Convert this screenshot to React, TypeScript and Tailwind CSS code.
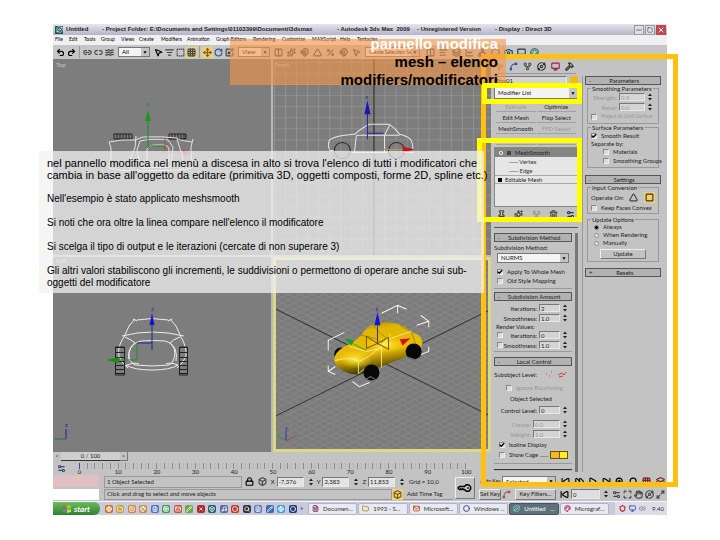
import React from 'react';
import {
  Undo2, Redo2, Link2, Unlink2, Waves, MousePointer2, ListFilter, SquareDashed, Grid3x3, Move, RotateCw, Scaling,
  Magnet, Percent, Triangle, Layers, AlignLeft, Columns2, ChartLine, Network, Circle, Camera, Monitor, Hammer,
  Sparkles, Pin, Trash2, Settings2, Lock, Box, KeyRound, SkipBack, SkipForward, Play, ZoomIn, Hand, Orbit, Maximize,
  Spline, Globe, Folder, FileText, Mail, Image, Music, Shield, Table, Pencil, Palette, Check, GitFork, Maximize2,
  FastForward, Search, Volume2, Minus, X, Square,
} from 'lucide-react';

type IconType = React.ComponentType<{ className?: string; strokeWidth?: number }>;

const field = 'min-w-0 border border-[#777] border-r-[#e8e8e8] border-b-[#e8e8e8] px-px leading-none';

const Glyph: React.FC<{ icon: IconType; label: string; active?: boolean; color?: string }> = ({ icon: I, label, active, color = 'text-[#444]' }) => (
  <button aria-label={label} className={`flex size-[11px] shrink-0 items-center justify-center ${active ? 'bg-[#ecd07a]' : ''} ${color}`}>
    <I className="size-[9px]" strokeWidth={3} />
  </button>
);

const DropDown: React.FC<{ label: string; value: string; className: string }> = ({ label, value, className }) => (
  <span className={`flex border border-[#777] bg-[#f4f4f4] ${className}`}>
    <select aria-label={label} className="min-w-0 flex-1 appearance-none pl-[3px] leading-none">
      <option>{value}</option>
    </select>
    <span className="flex w-2 items-center justify-center bg-[#c4c4c4] text-[5px] leading-none text-black">▼</span>
  </span>
);

const Tick: React.FC<{ label: string; checked?: boolean; dim?: boolean; className?: string }> = ({ label, checked, dim, className = '' }) => (
  <label className={`flex items-center gap-1 whitespace-nowrap ${dim ? 'text-[#999]' : ''} ${className}`}>
    <span className="relative flex">
      <input type="checkbox" defaultChecked={checked} className="size-[6px] appearance-none border border-[#888] border-r-[#eee] border-b-[#eee] bg-[#dcdcdc]" />
      {checked && <Check className="pointer-events-none absolute inset-0 size-[6px] text-black" strokeWidth={5} />}
    </span>
    {label}
  </label>
);

const SpinArrows: React.FC = () => (
  <svg viewBox="0 0 6 8" className="ml-[2px] h-2 w-[6px] shrink-0" fill="#222">
    <path d="M3 0.5 5 3H1zM3 7.5 5 5H1z" />
  </svg>
);

const Spinner: React.FC<{ label: string; value: string; dim?: boolean; width?: string; tick?: boolean }> = ({ label, value, dim, width = 'w-[21px]', tick }) => (
  <div className="flex h-[10px] items-center">
    {tick && <input type="checkbox" aria-label={`Use ${label}`} className="size-[6px] appearance-none border border-[#888] border-r-[#eee] border-b-[#eee] bg-[#dcdcdc]" />}
    <label className={`flex flex-1 items-center justify-end gap-[2px] whitespace-nowrap ${dim ? 'text-[#999]' : ''}`}>
      {label}
      <input defaultValue={value} className={`h-2 bg-[#d4d4d4] ${field} ${width}`} />
    </label>
    <SpinArrows />
  </div>
);

const RollupTitle: React.FC<{ title: string; sign?: string }> = ({ title, sign = '-' }) => (
  <button className="flex h-[9px] w-full shrink-0 items-center border border-[#555] bg-[#b2b2b2] px-[3px] leading-none text-[#222]">
    <span>{sign}</span>
    <span className="flex-1 text-center">{title}</span>
  </button>
);

const Group: React.FC<{ title: string; className?: string; children: React.ReactNode }> = ({ title, className = '', children }) => (
  <fieldset className={`mx-[2px] min-w-0 border border-[#999] px-[3px] pb-[2px] ${className}`}>
    <legend className="px-px leading-[7px] whitespace-nowrap">{title}</legend>
    {children}
  </fieldset>
);

const TitleBar: React.FC = () => (
  <header className="flex h-[11px] items-center bg-linear-to-b from-[#e6e6f0] to-[#b4b4c6] pl-[2px] text-[6px] font-bold whitespace-pre text-[#222]">
    <span className="mr-[3px] flex size-2 items-center justify-center bg-[#1d5a5c] text-white"><Orbit className="size-[7px]" /></span>
    <h1 className="flex flex-1 overflow-hidden font-['Liberation_Sans',sans-serif]">
      <span className="w-9 shrink-0">Untitled</span>
      <span className="w-[235px] shrink-0">- Project Folder: E:\Documents and Settings\01103399\Documenti\3dsmax</span>
      <span className="w-20 shrink-0">- Autodesk 3ds Max  2009</span>
      <span className="w-[78px] shrink-0">- Unregistered Version</span>
      <span>- Display : Direct 3D</span>
    </h1>
    <div className="flex gap-px pr-px">
      <button aria-label="Minimize" className="flex size-[10px] items-end border border-[#999] bg-[#dedee6] text-[#333]"><Minus className="size-2" /></button>
      <button aria-label="Restore" className="flex size-[10px] items-center justify-center border border-[#999] bg-[#dedee6] text-[#333]"><Square className="size-[6px]" /></button>
      <button aria-label="Close" className="flex size-[10px] items-center justify-center bg-[#c2474c] text-white"><X className="size-2" strokeWidth={3} /></button>
    </div>
  </header>
);

const menus: [string, string][] = [
  ['File', 'w-[14px]'], ['Edit', 'w-[15px]'], ['Tools', 'w-[17px]'], ['Group', 'w-5'], ['Views', 'w-[18px]'],
  ['Create', 'w-[22px]'], ['Modifiers', 'w-[26px]'], ['Animation', 'w-[29px]'], ['Graph Editors', 'w-[37px]'],
  ['Rendering', 'w-[29px]'], ['Customize', 'w-[30px]'], ['MAXScript', 'w-7'], ['Help', 'w-[17px]'], ['Tentacles', 'w-7'],
];

const MenuBar: React.FC = () => (
  <nav className="flex h-[10px] items-center bg-[#f0f0f2] pl-[2px] text-[5px] whitespace-nowrap text-black">
    {menus.map(([name, width]) => (
      <button key={name} className={`shrink-0 text-left ${width}`}>{name}</button>
    ))}
  </nav>
);

const Toolbar: React.FC = () => (
  <div className="flex h-[14px] items-center overflow-hidden bg-[#c6c6c6] pl-[2px] text-[6px]">
    <Glyph icon={Undo2} label="Undo" color="text-black" />
    <Glyph icon={Redo2} label="Redo" color="text-black" />
    <span className="mx-[2px] h-3 w-px bg-[#999]" />
    <Glyph icon={Link2} label="Select and link" />
    <Glyph icon={Unlink2} label="Unlink" />
    <Glyph icon={Waves} label="Bind to space warp" />
    <DropDown label="Selection filter" value="All" className="mx-[3px] h-[10px] w-8 shrink-0" />
    <Glyph icon={MousePointer2} label="Select" color="text-black" />
    <Glyph icon={ListFilter} label="Select by name" />
    <Glyph icon={SquareDashed} label="Region" />
    <Glyph icon={Grid3x3} label="Crossing" active />
    <span className="mx-[2px] h-3 w-px bg-[#999]" />
    <Glyph icon={Move} label="Move" active color="text-[#8a5a10]" />
    <Glyph icon={RotateCw} label="Rotate" color="text-[#335599]" />
    <Glyph icon={Scaling} label="Scale" />
    <DropDown label="Reference coordinates" value="View" className="mx-[3px] h-[10px] w-8 shrink-0" />
    <div className="mr-[3px] flex gap-[2px]">
      <Glyph icon={Columns2} label="Pivot" />
      <Glyph icon={Sparkles} label="Manipulate" />
      <Glyph icon={Magnet} label="Snap" />
      <Glyph icon={Triangle} label="Angle snap" />
      <Glyph icon={Percent} label="Percent snap" />
      <Glyph icon={Magnet} label="Spinner snap" />
      <Glyph icon={MousePointer2} label="Edit selection sets" />
    </div>
    <DropDown label="Selection sets" value="Create Selection Set" className="mr-[5px] h-[10px] w-[55px] shrink-0 text-[5px]" />
    <div className="flex gap-[2px]">
      <Glyph icon={Columns2} label="Mirror" />
      <Glyph icon={AlignLeft} label="Align" />
      <Glyph icon={Layers} label="Layers" />
      <Glyph icon={ChartLine} label="Curve editor" />
      <Glyph icon={Network} label="Schematic" />
      <Glyph icon={Circle} label="Materials" />
      <Glyph icon={Camera} label="Render setup" color="text-[#1d4a4c]" />
      <Glyph icon={Monitor} label="Frame window" color="text-[#1d3a4c]" />
      <Glyph icon={Palette} label="Render" color="text-[#0f6a5c]" />
    </div>
  </div>
);

const TopView: React.FC = () => (
  <svg viewBox="53 59 218 196" preserveAspectRatio="xMinYMin slice" className="h-[196px] w-full bg-[#7d7d7d]" fill="none">
    <text x="56" y="67" fontSize="6" fill="#c8c8c8">Top</text>
    <g stroke="#222" strokeWidth="1">
      <path d="M114 134h18v5h-18zM169 134h17v5h-17zM117 134v5M120 134v5M123 134v5M126 134v5M129 134v5M172 134v5M175 134v5M178 134v5M181 134v5M184 134v5" />
    </g>
    <g stroke="#e2e2e2" strokeWidth="1">
      <path d="M109 142q3 5 2 14l-2 12q12 3 26 3l42-1q12 0 16-3l-2-12q-1-8 2-16" />
      <path d="M109 142q13-3 26-2l8-3q18-1 34 1l3 2 12 2M136 136l-1 12-4 8v13M177 139l3 10 3 8-1 12" />
      <path d="M140 141q12-3 28-1l5 7-2 20-30 1-4-18zM147 149q2-4 7-4l10 0q5 1 5 5v12h-22z" />
    </g>
    <path d="M148 110l3 11h-6z" fill="#1c991c" />
    <path d="M148 120v28M148 146h17" stroke="#1f8a1f" />
    <path d="M165 138v15h18" stroke="#a34a4a" />
    <path d="M183 150l9 3-9 3z" fill="#c22" />
    <text x="146" y="106" fontSize="6" fill="#1c8a1c">y</text>
    <path d="M66 241v9M66 240h10" stroke="#668866" />
  </svg>
);

const SideView: React.FC = () => (
  <svg viewBox="274 59 217 196" preserveAspectRatio="xMinYMin slice" className="h-[196px] w-full bg-[#7d7d7d]" fill="none">
    <defs>
      <pattern id="grid" x="275" y="62" width="11" height="11" patternUnits="userSpaceOnUse">
        <path d="M.5 0v11M0 .5h11" stroke="#909090" />
      </pattern>
    </defs>
    <rect x="274" y="59" width="217" height="196" fill="url(#grid)" />
    <text x="276" y="67" fontSize="6" fill="#c8c8c8">Front</text>
    <path d="M374.500 59v196" stroke="#1a1a1a" />
    <g stroke="#e6e6e6">
      <path d="M330 149q-2-7 1-10 7-4 24-5 10-8 15-10l20 0q6 4 10 10 8 2 11 5 3 6 2 11M357 135l-2 17M357 135h43M390 125l-5 10v17M352 152h36M330 150h5M405 152h9" />
    </g>
    <circle cx="343" cy="150" r="8" stroke="#222" />
    <circle cx="397" cy="150" r="8" stroke="#222" />
    <path d="M368 100l3 14h-6z" fill="#1717b8" />
    <path d="M368 113v26M368 133h16" stroke="#2525a0" />
    <text x="366" y="99" fontSize="6" fill="#2525a0">z</text>
    <path d="M384 149h20" stroke="#c09060" />
    <path d="M403 146l12 3-12 3z" fill="#d01010" />
    <path d="M286 232v10h12" stroke="#6666aa" />
  </svg>
);

const rungs = [348, 353, 358, 362, 366, 370, 374];

const RearView: React.FC = () => (
  <svg viewBox="53 258 218 195" preserveAspectRatio="xMinYMin slice" className="h-[195px] w-full bg-[#7d7d7d]" fill="none">
    <text x="56" y="264" fontSize="6" fill="#c8c8c8">Left</text>
    <g stroke="#eeeeee">
      <path d="M135 320l-6 7-5 11q-7 10-5 19 3 8 9 12M170 320l6 7 5 11q6 10 5 19-3 8-9 12M133 320l4 2M172 320l-4 2" />
      <path d="M137 321q15-3 31 0M122 337q30-8 62 0M125 338q7 3 10 6M180 338q-8 3-10 6" />
      <path d="M141 342q12-1 24 0 9 2 10 12-1 10-6 12-16 2-34 0-7-4-6-12 2-10 12-12z" />
      <path d="M135 344q-8 5-6 18M170 344q8 5 6 18M127 366q8-3 12-1M178 366q-8-3-12-1M126 366q8 5 26 5t26-5" />
    </g>
    <g stroke="#222">
      <path d="M115.500 348v28h9v-28zM179.500 348v28h8v-28z" />
      {rungs.map((y) => <path key={y} d={`M115 ${y + 0.5}h9M179 ${y + 0.5}h8`} />)}
    </g>
    <path d="M152 314l2.500 12h-5z" fill="#1515d0" />
    <path d="M152 325v26M137 344h15" stroke="#22228a" />
    <text x="151" y="312" fontSize="6" fill="#2525a0">z</text>
    <path d="M106 361l13-3v6z" fill="#159015" />
    <path d="M119 361h18v-16" stroke="#2f8a2f" />
    <path d="M66 430v10" stroke="#22228a" />
    <path d="M66 440h-11" stroke="#2f7a2f" />
    <text x="65" y="428" fontSize="6" fill="#22228a">z</text>
  </svg>
);

const PerspectiveView: React.FC = () => (
  <svg viewBox="276 260 211 189" preserveAspectRatio="xMinYMin slice" className="h-[189px] w-full bg-[#7b7b7b]" fill="none">
    <defs>
      <pattern id="floor" width="12" height="6" patternUnits="userSpaceOnUse">
        <path d="M0 0l12 6M0 6l12-6" stroke="#8d8d8d" strokeWidth="0.7" />
      </pattern>
      <linearGradient id="paint" x1="0" y1="0" x2="0.3" y2="1">
        <stop offset="0" stopColor="#8f7a00" />
        <stop offset="0.25" stopColor="#e0b600" />
        <stop offset="0.65" stopColor="#e8bc08" />
        <stop offset="1" stopColor="#3c3200" />
      </linearGradient>
      <radialGradient id="shine">
        <stop offset="0" stopColor="#ffee55" />
        <stop offset="1" stopColor="#ffd900" stopOpacity="0" />
      </radialGradient>
    </defs>
    <rect x="275" y="260" width="213" height="192" fill="url(#floor)" />
    <path d="M274 308l217 108M274 416l214-106" stroke="#333" />
    <g stroke="#f2f2f2">
      <path d="M328 350v-10l16-8M328 365v6l7 3M328 371l7-5M381 313l16-8v8M397 305l9 4M420 315l8 6-12 4M428 321v6M428 346v5l-10 4M352 381l7 5 10-4" />
    </g>
    <ellipse cx="340" cy="354" rx="6" ry="7" fill="#080808" />
    <path d="M334 360q-1-7 10-14 10-4 17-11 5-9 12-11 10-3 21-1 10 2 17 9 8 2 10 7 2 6-2 11l-15 7-34 13q-10 6-21 3-13-4-15-13z" fill="url(#paint)" />
    <ellipse cx="355" cy="359" rx="17" ry="9" fill="url(#shine)" />
    <ellipse cx="385" cy="344" rx="20" ry="8" fill="url(#shine)" />
    <path d="M361 335q14 2 20 7l5-4q-10-8-13-13M399 325l12 7 6 17" stroke="#9c8200" strokeWidth="0.8" />
    <path d="M358 361v12l8-6M349 346l17 5 14-3 10-14M381 345v22M411 331q-12 4-24 8M335 360q14-4 24 1 12-6 21-14" stroke="#fff2a0" strokeWidth="0.8" />
    <ellipse cx="371" cy="372" rx="8" ry="8" fill="#080808" />
    <ellipse cx="413" cy="351" rx="8" ry="8" fill="#080808" />
    <path d="M365 379l5-3 5 3M408 357l6 2" stroke="#777" />
    <path d="M377 312l3 13h-6z" fill="#1212e0" />
    <path d="M377 324v20" stroke="#333399" />
    <text x="375" y="311" fontSize="6" fill="#2525a0">z</text>
    <path d="M366 336v12l11-5 11 6v-12l-11 6z" stroke="#7a5a00" />
    <path d="M344 338l10 2-3 5z" fill="#16a030" />
    <path d="M352 343l14 7" stroke="#44aa22" />
    <path d="M410 338l-11 1 3 6z" fill="#d01414" />
    <path d="M286 430v10" stroke="#2233aa" />
    <path d="M286 440l11-6" stroke="#b04444" />
    <path d="M286 440l-8-5" stroke="#339933" />
    <text x="285" y="429" fontSize="6" fill="#2233aa">z</text>
  </svg>
);

const TimeLine: React.FC = () => (
  <div className="bg-[#c3c3c3] text-[6px] leading-none text-[#222]">
    <div className="flex h-[9px] items-stretch">
      <button className="w-2 text-[5px]">&lt;</button>
      <button className="w-[59px] border-b border-[#333] bg-[#cfcfcf]">0 / 100</button>
      <button className="w-2 border-r border-b border-[#777] text-[5px]">&gt;</button>
    </div>
    <div className="flex h-[14px]">
      <button aria-label="Mini curve editor" className="mr-[10px] ml-1 flex w-3 items-center text-[#334477]"><Settings2 className="size-[9px]" strokeWidth={3} /></button>
      <div className="mr-6 flex-1 pt-[2px]">
        <div className="flex justify-between">
          {Array.from({ length: 101 }, (_, i) => (
            <span key={i} className={`h-[6px] w-px ${i === 0 ? 'bg-[#2255aa]' : i % 2 ? 'bg-[#b8b8b8]' : 'bg-[#8a8a8a]'}`} />
          ))}
        </div>
        <div className="flex justify-between">
          {Array.from({ length: 11 }, (_, i) => (
            <span key={i} className="flex w-px justify-center">{i * 10}</span>
          ))}
        </div>
      </div>
    </div>
  </div>
);

const tabs: [IconType, string, string][] = [
  [MousePointer2, 'Create', 'text-[#b08050]'], [Spline, 'Modify', 'text-[#2a5590]'], [GitFork, 'Hierarchy', 'text-[#555]'],
  [Orbit, 'Motion', 'text-[#333]'], [Monitor, 'Display', 'text-[#992255]'], [Hammer, 'Utilities', 'text-[#333]'],
];

const modifierButtons: [string, boolean][] = [
  ['Extrude', true], ['Optimize', false], ['Edit Mesh', false], ['Flop Select', false],
  ['MeshSmooth', false], ['FFD Select', true], ['Subdivide', true], ['Poly Select', true],
];

const ModifierColumn: React.FC = () => (
  <div className="flex w-[84px] shrink-0 flex-col">
    <label className="mb-[2px] flex h-[9px] gap-[3px]">
      <input aria-label="Object name" defaultValue="Box01" className={`flex-1 bg-[#d4d4d4] ${field}`} />
      <span className="w-2 bg-[#f0b820]" />
    </label>
    <DropDown label="Modifier list" value="Modifier List" className="mb-[3px] h-[12px]" />
    <div className="mb-[2px] grid grid-cols-2 gap-px px-[2px]">
      {modifierButtons.map(([name, dim]) => (
        <button key={name} className={`h-[10px] border-b border-[#a0a0a0] leading-none whitespace-nowrap ${dim ? 'text-[#999]' : 'text-[#222]'}`}>{name}</button>
      ))}
    </div>
    <ul className="mb-[2px] h-[60px] border border-[#888] bg-[#e6e6e6] leading-[9px]">
      <li className="flex items-center gap-1 bg-[#858585] pl-1"><Circle className="size-1 text-white" strokeWidth={5} /><span className="size-1 bg-[#444]" />MeshSmooth</li>
      <li className="pl-[14px] text-[#333]">── Vertex</li>
      <li className="pl-[14px] text-[#333]">── Edge</li>
      <li className="flex items-center gap-[3px] border-y border-[#aaa] pl-[3px] leading-[7px]"><span className="size-1 bg-black" />Editable Mesh</li>
    </ul>
    <div className="flex justify-between px-[2px]">
      <Glyph icon={Pin} label="Pin stack" />
      <Glyph icon={Sparkles} label="Show end result" />
      <Glyph icon={GitFork} label="Make unique" color="text-[#999]" />
      <Glyph icon={Trash2} label="Remove modifier" />
      <Glyph icon={Settings2} label="Configure sets" color="text-[#223366]" />
    </div>
    <div className="mt-[7px] flex h-[245px] overflow-hidden border-t border-[#555] pt-[5px]">
      <div className="flex min-w-0 flex-1 flex-col">
        <section className="mb-[3px] h-[56px] shrink-0 border-b border-[#999]">
          <RollupTitle title="Subdivision Method" />
          <div className="pt-px leading-[9px] whitespace-nowrap">Subdivision Method:</div>
          <DropDown label="Subdivision method" value="NURMS" className="mx-[3px] mt-px h-[10px]" />
          <Tick label="Apply To Whole Mesh" checked className="mt-1 ml-[3px] leading-[9px]" />
          <Tick label="Old Style Mapping" className="ml-[3px] leading-[10px]" />
        </section>
        <section className="mb-[5px] h-[60px] shrink-0 border-b border-[#999] pr-1">
          <div className="-mr-1"><RollupTitle title="Subdivision Amount" /></div>
          <div className="h-[2px]" />
          <Spinner label="Iterations:" value="2" />
          <Spinner label="Smoothness:" value="1,0" />
          <div className="pl-[2px] leading-[7px]">Render Values:</div>
          <div className="pl-[3px]">
            <Spinner label="Iterations:" value="0" tick />
            <Spinner label="Smoothness:" value="1,0" tick />
          </div>
        </section>
        <section className="mb-[5px] h-[107px] shrink-0 border-b border-[#999] pr-1">
          <div className="-mr-1"><RollupTitle title="Local Control" /></div>
          <div className="flex h-[17px] items-center gap-2 whitespace-nowrap">
            Subobject Level:
            <svg viewBox="0 0 22 7" className="h-[7px] w-[22px]" fill="none" stroke="#c44">
              <path d="M1 3h1M4 5h1M6 1h1M13 4l4-2 2 2 2-3M14 6l4-1" />
            </svg>
          </div>
          <Tick label="Ignore Backfacing" dim className="ml-3 leading-[10px]" />
          <div className="text-center leading-[12px]">Object Selected</div>
          <Spinner label="Control Level:" value="0" />
          <div className="h-1" />
          <Spinner label="Crease:" value="0,0" dim width="w-[27px]" />
          <Spinner label="Weight:" value="1,0" dim width="w-[27px]" />
          <Tick label="Isoline Display" checked className="ml-[5px] leading-[11px]" />
          <div className="flex items-center justify-between">
            <Tick label="Show Cage ......" className="ml-[5px] leading-[10px]" />
            <span className="flex border border-[#665500]"><i className="h-[6px] w-2 bg-[#f5b820]" /><i className="h-[6px] w-2 border-l border-[#665500] bg-[#ffee20]" /></span>
          </div>
        </section>
        <div className="h-[2px] border-t border-[#333] bg-[#b2b2b2]" />
      </div>
      <div className="ml-[3px] w-[3px] bg-[#777]" />
    </div>
  </div>
);

const updateModes = ['Always', 'When Rendering', 'Manually'];

const ParametersColumn: React.FC = () => (
  <div className="ml-1 min-w-0 flex-1 border-l border-[#999] pl-[2px]">
    <RollupTitle title="Parameters" />
    <Group title="Smoothing Parameters" className="h-[39px]">
      <div className="pr-[2px]">
        <Spinner label="Strength:" value="0,5" dim width="w-[26px]" />
        <Spinner label="Relax:" value="0,0" dim width="w-[26px]" />
        <Tick label="Project to Limit Surface" dim className="text-[5px] leading-[9px]" />
      </div>
    </Group>
    <Group title="Surface Parameters" className="h-[44px]">
      <Tick label="Smooth Result" checked className="leading-[9px]" />
      <div className="leading-[8px]">Separate by:</div>
      <Tick label="Materials" className="ml-3 leading-[8px]" />
      <Tick label="Smoothing Groups" className="ml-3 leading-[9px]" />
    </Group>
    <div className="h-[7px]" />
    <RollupTitle title="Settings" />
    <Group title="Input Conversion" className="h-[30px]">
      <div className="flex h-[13px] items-center justify-between whitespace-nowrap">
        Operate On:
        <Glyph icon={Triangle} label="Faces" />
        <Glyph icon={Square} label="Polygons" active color="text-[#443300]" />
      </div>
      <Tick label="Keep Faces Convex" className="leading-[8px]" />
    </Group>
    <Group title="Update Options" className="mt-[2px] h-[46px]">
      {updateModes.map((mode, i) => (
        <label key={mode} className="ml-[3px] flex items-center gap-1 leading-[8px]">
          <input type="radio" name="update" defaultChecked={i === 0} className="size-[5px] appearance-none rounded-full border border-[#888] bg-[#e2e2e2] checked:bg-black" />
          {mode}
        </label>
      ))}
      <button className="mx-auto mt-[2px] block h-[10px] w-[46px] border border-[#eee] border-r-[#777] border-b-[#777] leading-none">Update</button>
    </Group>
    <div className="h-[6px]" />
    <RollupTitle title="Resets" sign="+" />
  </div>
);

const CommandPanel: React.FC = () => (
  <aside className="w-[176px] shrink-0 bg-[#c3c3c3] pr-[6px] pl-[3px] text-[6px] text-[#222]">
    <div className="mb-[2px] flex h-[15px] w-[82px] items-center gap-[3px] border-b border-[#999]">
      {tabs.map(([icon, name, color]) => <Glyph key={name} icon={icon} label={name} color={color} />)}
    </div>
    <div className="flex">
      <ModifierColumn />
      <ParametersColumn />
    </div>
  </aside>
);

const coords: [string, string][] = [['X', '-7,376'], ['Y', '2,383'], ['Z', '11,853']];

const StatusBar: React.FC = () => (
  <div className="flex h-[26px] bg-[#c3c3c3] text-[6px] leading-none text-[#222]">
    <div className="mr-[5px] flex w-[46px] shrink-0 flex-col gap-[2px] pb-px">
      <div className="flex-1 bg-[#e0c0c2]" />
      <div className="flex-1 bg-white" />
    </div>
    <div className="grid min-w-0 flex-1 grid-rows-2 gap-px py-px">
      <div className="flex items-center">
        <span className="flex h-full flex-1 items-center border border-[#999] pl-[2px] whitespace-nowrap">1 Object Selected</span>
        <span className="flex gap-[2px] pl-[2px]">
          <Glyph icon={Lock} label="Lock selection" color="text-black" />
          <Glyph icon={Box} label="Absolute mode" />
        </span>
        {coords.map(([axis, value]) => (
          <label key={axis} className="ml-[3px] flex items-center gap-[2px]">
            {axis}
            <input defaultValue={value} className={`h-[10px] w-[27px] bg-[#e4e4e4] ${field}`} />
            <SpinArrows />
          </label>
        ))}
        <span className="ml-1 w-[44px] whitespace-nowrap">Grid = 10,0</span>
      </div>
      <div className="flex items-center">
        <span className="flex h-full flex-1 items-center border border-[#999] pl-[2px] whitespace-nowrap">Click and drag to select and move objects</span>
        <Glyph icon={Box} label="Communication center" active color="text-[#775511]" />
        <button className="h-full w-[50px] border-b border-[#999] pl-1 text-left whitespace-nowrap">Add Time Tag</button>
      </div>
    </div>
    <button aria-label="Set keys" className="m-[2px] flex w-5 items-center justify-center border border-[#eee] border-r-[#777] border-b-[#777] text-black"><KeyRound className="size-3 rotate-45" strokeWidth={3} /></button>
    <div className="ml-[2px] grid w-[188px] shrink-0 grid-rows-2 gap-px py-px pr-1">
      <div className="flex items-center">
        <button className="w-[23px] text-[5px] whitespace-nowrap">Auto Key</button>
        <DropDown label="Key mode" value="Selected" className="mr-1 h-[11px] w-[54px]" />
        <div className="flex flex-1 justify-between">
          <Glyph icon={SkipBack} label="Go to start" color="text-black" />
          <Glyph icon={FastForward} label="Previous frame" color="text-black" />
          <Glyph icon={Play} label="Play" color="text-black" />
          <Glyph icon={SkipForward} label="Go to end" color="text-black" />
          <Glyph icon={ZoomIn} label="Zoom" color="text-black" />
          <Glyph icon={Search} label="Zoom all" color="text-black" />
          <Glyph icon={Grid3x3} label="Zoom extents" color="text-[#772222]" />
          <Glyph icon={Layers} label="Zoom extents all" color="text-[#772222]" />
        </div>
      </div>
      <div className="flex items-center">
        <button className="h-[11px] w-[22px] border border-[#eee] border-r-[#777] border-b-[#777] whitespace-nowrap">Set Key</button>
        <Glyph icon={Spline} label="Tangents" color="text-[#995555]" />
        <button className="mx-[3px] h-[11px] w-[41px] border border-[#eee] border-r-[#777] border-b-[#777] whitespace-nowrap">Key Filters...</button>
        <Glyph icon={SkipBack} label="Key mode toggle" color="text-black" />
        <input aria-label="Frame" defaultValue="0" className={`mx-px h-[10px] w-[29px] bg-[#dedede] ${field}`} />
        <SpinArrows />
        <div className="flex flex-1 justify-between pl-[2px]">
          <Glyph icon={Settings2} label="Time configuration" />
          <Glyph icon={Maximize} label="Region zoom" />
          <Glyph icon={Hand} label="Pan" />
          <Glyph icon={Orbit} label="Orbit" />
          <Glyph icon={Maximize2} label="Maximize viewport" />
        </div>
      </div>
    </div>
  </div>
);

const quickLaunch: [IconType, string, string][] = [
  [Globe, 'Browser', 'bg-[#d96a1c]'], [Folder, 'Folder', 'bg-[#c9a040]'], [Image, 'Pictures', 'bg-[#d08040]'], [Palette, 'Paint', 'bg-[#c89050]'],
  [FileText, 'Writer', 'bg-[#4a72c0]'], [Table, 'Sheets', 'bg-[#3c9a4a]'], [Mail, 'Slides', 'bg-[#c8503c]'], [Pencil, 'Draw', 'bg-[#6aa83a]'],
  [X, 'Autocad', 'bg-[#b02828]'], [Box, '3ds Max', 'bg-[#1f6468]'], [Music, 'Music', 'bg-[#5a6a9a]'], [Circle, 'Ladybug', 'bg-[#c03a28]'],
  [Search, 'Search', 'bg-[#333333]'], [FileText, 'Notes', 'bg-[#5878c0]'], [Pencil, 'Editor', 'bg-[#4468b0]'], [Globe, 'Web', 'bg-[#38a0d8]'], [Circle, 'Player', 'bg-[#223a78]'],
];

const tasks: [IconType, string, string][] = [
  [FileText, 'Documen...', 'text-[#7a2a55]'], [Folder, '1993 - S...', 'text-[#b08a20]'], [Mail, 'Microsoft...', 'text-[#c04828]'],
  [Circle, 'Windows ...', 'text-[#223a78]'], [Orbit, 'Untitled   ...', 'text-[#7fd0d0]'], [Palette, 'Micrograf...', 'text-[#b02850]'],
];

const TaskBar: React.FC = () => (
  <footer className="flex h-[14px] items-center border-t border-[#f4f4ff] bg-[#c9cbdc] text-[6px] leading-none text-[#333]">
    <button className="mr-[5px] flex h-full w-[47px] shrink-0 items-center justify-center gap-[3px] rounded-r-md bg-linear-to-b from-[#6cbc60] to-[#2c8230] text-[8px] font-bold text-white italic">
      <svg viewBox="0 0 8 8" className="size-2">
        <path d="M0 1l3-1v3.500H0z" fill="#e8532c" /><path d="M4 0l4 1v2.500H4z" fill="#8fd050" />
        <path d="M0 4.500h3V8L0 7z" fill="#4a8ae8" /><path d="M4 4.500h4V7L4 8z" fill="#f5cf30" />
      </svg>
      start
    </button>
    <div className="flex w-[202px] shrink-0 justify-between pr-1">
      {quickLaunch.map(([I, name, color]) => (
        <button key={name} aria-label={name} className={`flex size-2 items-center justify-center rounded-xs text-white ${color}`}><I className="size-[6px]" strokeWidth={3} /></button>
      ))}
      <span className="font-bold">»</span>
    </div>
    <div className="mr-[6px] ml-px flex h-[12px] min-w-0 flex-1 gap-px">
      {tasks.map(([I, name, color]) => (
        <button
          key={name}
          className={`flex min-w-0 flex-1 items-center gap-1 rounded-xs border pl-[3px] whitespace-pre ${name.startsWith('Untitled') ? 'border-[#44555c] bg-[#5f727c] text-white' : 'border-[#b4b4c4] bg-[#e9e9f1]'}`}
        >
          <I className={`size-[7px] shrink-0 ${color}`} strokeWidth={3} />
          {name}
        </button>
      ))}
    </div>
    <div className="flex h-full w-[52px] shrink-0 items-center gap-[3px] bg-[#dddde8] pl-1 whitespace-nowrap">
      <Shield className="size-[7px] text-[#cc2222]" strokeWidth={4} />
      <Monitor className="size-[7px] text-[#3355aa]" strokeWidth={3} />
      <Volume2 className="size-[7px] text-[#556677]" />
      <span className="ml-[3px]">9.40</span>
    </div>
  </footer>
);

const App: React.FC = () => {
  return (
    <div className="relative min-h-screen bg-white px-[53px] pt-6 font-['Lato','Liberation_Sans',sans-serif]">
      <div>
        <TitleBar />
        <MenuBar />
        <Toolbar />
        <div className="flex">
          <main className="min-w-0 flex-1 bg-[#c3c3c3]">
            <div className="grid grid-cols-2 gap-[2px] overflow-hidden bg-[#b8b8b8]">
              <TopView />
              <SideView />
              <RearView />
              <div className="border-3 border-[#dcd884]"><PerspectiveView /></div>
            </div>
            <TimeLine />
          </main>
          <CommandPanel />
        </div>
        <StatusBar />
        <TaskBar />
      </div>

      {/* slide annotations */}
      <div className="pointer-events-none absolute top-[54px] right-[42px] h-[433px] w-[197px] border-5 border-[#ffc010]" />
      <div className="pointer-events-none absolute top-[138px] right-[138px] h-[84px] w-[105px] border-5 border-[#ffff00]" />
      <section className="absolute top-[151px] right-[236px] left-[39px] bg-[#f2f2f2]/75 px-2 pt-[6px] pb-1 font-['Liberation_Sans',Arial,sans-serif] text-[10px] leading-[12px] text-black">
        <p className="text-[11px] leading-[12px] whitespace-nowrap">nel pannello modifica nel menù a discesa in alto si trova l'elenco  di tutti i  modificatori che<br />cambia in base all'oggetto da editare (primitiva 3D, oggetti composti, forme 2D, spline etc.)</p>
        <p className="mt-3">Nell'esempio è stato applicato meshsmooth</p>
        <p className="mt-3">Si noti che ora oltre la linea compare nell'elenco il modificatore</p>
        <p className="mt-3">Si scelga il tipo di output e le iterazioni (cercate di non superare 3)</p>
        <p className="mt-3">Gli altri valori stabiliscono gli incrementi, le suddivisioni o permettono di operare anche sui sub-<br />oggetti del modificatore</p>
      </section>
      <h2 className="absolute top-[39px] right-[214px] h-[46px] w-[276px] bg-[#f79646]/60 pr-2 text-right font-['Liberation_Sans',Arial,sans-serif] text-[15px] leading-[18px] font-bold text-black">
        <span className="-mt-1 block text-white">pannello modifica</span>
        mesh – elenco<br />modifiers/modificatori
      </h2>
      <div className="pointer-events-none absolute top-[83px] right-[138px] h-[21px] w-[100px] border-5 border-[#ffff00]" />
    </div>
  );
};

export default App;
